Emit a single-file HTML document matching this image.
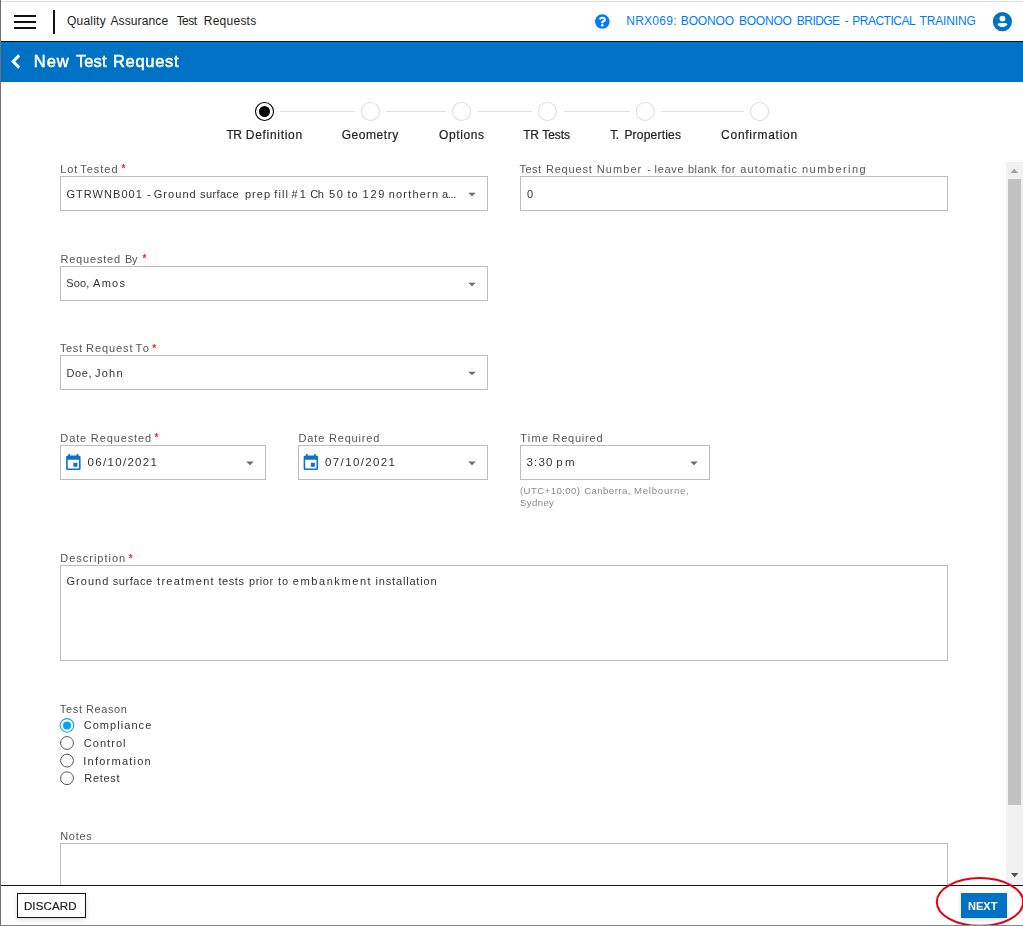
<!DOCTYPE html>
<html><head><meta charset="utf-8"><title>New Test Request</title>
<style>
html,body{margin:0;padding:0;background:#fff;overflow:hidden}
body{width:1023px;height:926px;position:relative;font-family:"Liberation Sans",sans-serif}
.t{position:absolute;white-space:pre;line-height:20px;height:20px;font-family:"Liberation Sans",sans-serif}
.a{position:absolute;display:block}
.g{position:absolute;left:0;top:0;width:1023px;height:926px;will-change:transform}
.b{position:absolute;box-sizing:border-box;border:1px solid #bdbdbd;background:#fff}
</style></head><body>
<div style="position:absolute;left:0;top:1px;width:1023px;height:1px;background:#ddd"></div>
<div style="position:absolute;left:0;top:41px;width:1023px;height:1px;background:#111"></div>
<div style="position:absolute;left:0;top:42px;width:1023px;height:40px;background:#0072c6"></div>
<div style="position:absolute;left:14px;top:15px;width:22px;height:2px;background:#111"></div>
<div style="position:absolute;left:14px;top:21px;width:22px;height:2px;background:#111"></div>
<div style="position:absolute;left:14px;top:27px;width:22px;height:2px;background:#111"></div>
<div style="position:absolute;left:53px;top:10px;width:2px;height:24px;background:#111"></div>
<svg class="a" style="left:594px;top:14px" width="17" height="16" viewBox="-27.300 0 580.270 546.130"><path fill="#007bff" d="M504 256c0 136.997-111.043 248-248 248S8 392.997 8 256C8 119.083 119.043 8 256 8s248 111.083 248 248zM262.655 90c-54.497 0-89.255 22.957-116.549 63.758-3.536 5.286-2.353 12.415 2.715 16.258l34.699 26.31c5.205 3.947 12.621 3.008 16.665-2.122 17.864-22.658 30.113-35.797 57.303-35.797 20.429 0 45.698 13.148 45.698 32.958 0 14.976-12.363 22.667-32.534 33.976C247.128 238.528 216 254.941 216 296v4c0 6.627 5.373 12 12 12h56c6.627 0 12-5.373 12-12v-1.333c0-28.462 83.186-29.647 83.186-106.667 0-58.002-60.165-102-116.531-102zM256 338c-25.365 0-46 20.635-46 46 0 25.364 20.635 46 46 46s46-20.636 46-46c0-25.365-20.635-46-46-46z"/></svg>
<svg class="a" style="left:991px;top:10px" width="23" height="23" viewBox="991 10 23 23"><circle cx="1002.400" cy="21.600" r="9.600" fill="#0072c6"/><circle cx="1002.450" cy="18.600" r="2.950" fill="#fff"/><path fill="#fff" d="M997.450 24.200C997.450 22.500 1007.450 22.500 1007.450 24.200C1006.400 25.900 1004.600 27.050 1002.450 27.050C1000.300 27.050 998.500 25.900 997.450 24.200Z"/></svg>
<svg class="a" style="left:9px;top:52px" width="14" height="19" viewBox="0 0 14 19"><path d="M10.200 3.400L4.100 9.500l6.100 6.100" fill="none" stroke="#fff" stroke-width="2.900"/></svg>
<svg class="a" style="left:253px;top:100px" width="24" height="24" viewBox="0 0 24 24"><g transform="translate(0.500 0.500)"><circle cx="11" cy="11" r="9" fill="#fff" stroke="#000" stroke-width="1.100"/><circle cx="11" cy="11" r="5.500" fill="#000"/></g></svg><div style="position:absolute;left:280px;top:111px;width:75px;height:1px;background:#e2e2e2"></div><svg class="a" style="left:359px;top:100px" width="24" height="24" viewBox="0 0 24 24"><g transform="translate(0.500 0.500)"><circle cx="11" cy="11" r="9.050" fill="#fff" stroke="#e0e0e0" stroke-width="1.100"/></g></svg><div style="position:absolute;left:386px;top:111px;width:60px;height:1px;background:#e2e2e2"></div><svg class="a" style="left:450px;top:100px" width="24" height="24" viewBox="0 0 24 24"><g transform="translate(0.500 0.500)"><circle cx="11" cy="11" r="9.050" fill="#fff" stroke="#e0e0e0" stroke-width="1.100"/></g></svg><div style="position:absolute;left:478px;top:111px;width:54px;height:1px;background:#e2e2e2"></div><svg class="a" style="left:536px;top:100px" width="24" height="24" viewBox="0 0 24 24"><g transform="translate(0.500 0.500)"><circle cx="11" cy="11" r="9.050" fill="#fff" stroke="#e0e0e0" stroke-width="1.100"/></g></svg><div style="position:absolute;left:564px;top:111px;width:66px;height:1px;background:#e2e2e2"></div><svg class="a" style="left:634px;top:100px" width="24" height="24" viewBox="0 0 24 24"><g transform="translate(0.300 0.500)"><circle cx="11" cy="11" r="9.050" fill="#fff" stroke="#e0e0e0" stroke-width="1.100"/></g></svg><div style="position:absolute;left:661px;top:111px;width:83px;height:1px;background:#e2e2e2"></div><svg class="a" style="left:748px;top:100px" width="24" height="24" viewBox="0 0 24 24"><g transform="translate(0.500 0.500)"><circle cx="11" cy="11" r="9.050" fill="#fff" stroke="#e0e0e0" stroke-width="1.100"/></g></svg>
<div style="position:absolute;left:1006px;top:162px;width:17px;height:723px;background:#f1f1f1"></div>
<div style="position:absolute;left:1008px;top:179px;width:13px;height:626px;background:#c1c1c1"></div>
<svg class="a" style="left:1010px;top:168px" width="10" height="6" viewBox="0 0 10 6"><g transform="translate(0.600 0.700)"><path d="M0 4.300h7.600L3.800 0z" fill="#a3a3a3"/></g></svg>
<svg class="a" style="left:1010px;top:873px" width="10" height="6" viewBox="0 0 10 6"><g transform="translate(0.900 0.000)"><path d="M0 0h7.600L3.800 4.300z" fill="#505050"/></g></svg>
<div class="b" style="left:60px;top:176px;width:428px;height:35px"></div><div class="b" style="left:520px;top:176px;width:428px;height:35px"></div><div class="b" style="left:60px;top:266px;width:428px;height:35px"></div><div class="b" style="left:60px;top:355px;width:428px;height:35px"></div>
<div class="b" style="left:60px;top:445px;width:206px;height:35px"></div><div class="b" style="left:298px;top:445px;width:190px;height:35px"></div><div class="b" style="left:520px;top:445px;width:190px;height:35px"></div>
<div class="b" style="left:60px;top:565px;width:888px;height:96px"></div><div class="b" style="left:60px;top:843px;width:888px;height:60px"></div>
<svg class="a" style="left:468px;top:192px" width="9" height="6" viewBox="0 0 9 6"><g transform="translate(0.200 0.700)"><path d="M0 0h7.600L3.800 3.600z" fill="#6c6c6c"/></g></svg><svg class="a" style="left:468px;top:282px" width="9" height="6" viewBox="0 0 9 6"><g transform="translate(0.200 0.700)"><path d="M0 0h7.600L3.800 3.600z" fill="#6c6c6c"/></g></svg><svg class="a" style="left:468px;top:371px" width="9" height="6" viewBox="0 0 9 6"><g transform="translate(0.200 0.700)"><path d="M0 0h7.600L3.800 3.600z" fill="#6c6c6c"/></g></svg><svg class="a" style="left:246px;top:461px" width="9" height="6" viewBox="0 0 9 6"><g transform="translate(0.200 0.600)"><path d="M0 0h7.600L3.800 3.600z" fill="#6c6c6c"/></g></svg><svg class="a" style="left:468px;top:461px" width="9" height="6" viewBox="0 0 9 6"><g transform="translate(0.200 0.600)"><path d="M0 0h7.600L3.800 3.600z" fill="#6c6c6c"/></g></svg><svg class="a" style="left:690px;top:461px" width="9" height="6" viewBox="0 0 9 6"><g transform="translate(0.200 0.600)"><path d="M0 0h7.600L3.800 3.600z" fill="#6c6c6c"/></g></svg>
<svg class="a" style="left:63px;top:453px" width="22" height="21" viewBox="0 0 22 21"><g transform="translate(0.700 0.200) scale(0.80417)"><path fill="#0a72c8" d="M17 12h-5v5h5v-5zM16 1v2H8V1H6v2H5c-1.110 0-1.990.900-1.990 2L3 19c0 1.100.890 2 2 2h14c1.100 0 2-.900 2-2V5c0-1.100-.900-2-2-2h-1V1h-2zm3 18H5V8h14v11z"/></g></svg><svg class="a" style="left:301px;top:453px" width="21" height="21" viewBox="0 0 21 21"><g transform="translate(0.200 0.200) scale(0.80417)"><path fill="#0a72c8" d="M17 12h-5v5h5v-5zM16 1v2H8V1H6v2H5c-1.110 0-1.990.900-1.990 2L3 19c0 1.100.890 2 2 2h14c1.100 0 2-.900 2-2V5c0-1.100-.900-2-2-2h-1V1h-2zm3 18H5V8h14v11z"/></g></svg>
<svg class="a" style="left:59px;top:717px" width="17" height="18" viewBox="0 0 17 18"><g transform="translate(0.000 0.400)"><circle cx="8" cy="8" r="6.800" fill="#fff" stroke="#06a3f4" stroke-width="1.050"/><circle cx="8" cy="8" r="4" fill="#06a3f4"/></g></svg><svg class="a" style="left:59px;top:735px" width="17" height="17" viewBox="0 0 17 17"><g transform="translate(0.000 0.000)"><circle cx="8" cy="8" r="6.400" fill="#fff" stroke="#555" stroke-width="1"/></g></svg><svg class="a" style="left:59px;top:752px" width="17" height="18" viewBox="0 0 17 18"><g transform="translate(0.000 0.600)"><circle cx="8" cy="8" r="6.400" fill="#fff" stroke="#555" stroke-width="1"/></g></svg><svg class="a" style="left:59px;top:770px" width="17" height="18" viewBox="0 0 17 18"><g transform="translate(0.000 0.200)"><circle cx="8" cy="8" r="6.400" fill="#fff" stroke="#555" stroke-width="1"/></g></svg>
<div style="position:absolute;left:0;top:885px;width:1023px;height:41px;background:#fff"></div>
<div style="position:absolute;left:0;top:885px;width:1023px;height:1px;background:#111"></div>
<div style="position:absolute;left:17px;top:893px;width:69px;height:25px;box-sizing:border-box;border:1px solid #111;background:#fff;box-shadow:0 2px 5px rgba(0,0,0,.13)"></div>
<div style="position:absolute;left:961px;top:893px;width:46px;height:25px;background:#0072c6;box-shadow:0 2px 5px rgba(0,0,0,.13)"></div>
<span class="t" style="left:66.90px;top:10.94px;font-size:12px;color:#222;font-weight:400;letter-spacing:0.242px">Quality </span><span class="t" style="left:110.40px;top:10.94px;font-size:12px;color:#222;font-weight:400;letter-spacing:0.135px">Assurance</span><span class="t" style="left:176.64px;top:10.94px;font-size:12px;color:#222;font-weight:400;letter-spacing:-0.550px">Test </span><span class="t" style="left:203.80px;top:10.94px;font-size:12px;color:#222;font-weight:400;letter-spacing:0.244px">Requests</span><span class="t" style="left:626.20px;top:11.04px;font-size:12px;color:#007bff;font-weight:400;letter-spacing:0.274px">NRX069: </span><span class="t" style="left:680.80px;top:11.04px;font-size:12px;color:#007bff;font-weight:400;letter-spacing:-0.154px">BOONOO </span><span class="t" style="left:739.00px;top:11.04px;font-size:12px;color:#007bff;font-weight:400;letter-spacing:-0.234px">BOONOO </span><span class="t" style="left:796.87px;top:11.04px;font-size:12px;color:#007bff;font-weight:400;letter-spacing:-0.550px">BRIDGE </span><span class="t" style="left:844.50px;top:11.04px;font-size:12px;color:#007bff;font-weight:400;letter-spacing:0.000px">- </span><span class="t" style="left:852.20px;top:11.04px;font-size:12px;color:#007bff;font-weight:400;letter-spacing:-0.484px">PRACTICAL </span><span class="t" style="left:919.60px;top:11.04px;font-size:12px;color:#007bff;font-weight:400;letter-spacing:-0.157px">TRAINING</span><div class="g"><span class="t" style="left:33.80px;top:51.08px;font-size:16.5px;color:#fff;font-weight:400;letter-spacing:0.954px;-webkit-text-stroke:0.5px #fff">New </span><span class="t" style="left:75.90px;top:51.08px;font-size:16.5px;color:#fff;font-weight:400;letter-spacing:0.108px;-webkit-text-stroke:0.5px #fff">Test </span><span class="t" style="left:113.00px;top:51.08px;font-size:16.5px;color:#fff;font-weight:400;letter-spacing:0.671px;-webkit-text-stroke:0.5px #fff">Request</span><span class="t" style="left:226.46px;top:125.24px;font-size:12px;color:#222;font-weight:400;letter-spacing:-0.550px;-webkit-text-stroke:0.2px #222">TR </span><span class="t" style="left:245.80px;top:125.24px;font-size:12px;color:#222;font-weight:400;letter-spacing:0.705px;-webkit-text-stroke:0.2px #222">Definition</span><span class="t" style="left:341.70px;top:125.24px;font-size:12px;color:#222;font-weight:400;letter-spacing:0.560px;-webkit-text-stroke:0.2px #222">Geometry</span><span class="t" style="left:439.00px;top:125.24px;font-size:12px;color:#222;font-weight:400;letter-spacing:0.607px;-webkit-text-stroke:0.2px #222">Options</span><span class="t" style="left:523.36px;top:125.24px;font-size:12px;color:#222;font-weight:400;letter-spacing:-0.550px;-webkit-text-stroke:0.2px #222">TR </span><span class="t" style="left:542.30px;top:125.24px;font-size:12px;color:#222;font-weight:400;letter-spacing:-0.052px;-webkit-text-stroke:0.2px #222">Tests</span><span class="t" style="left:610.32px;top:125.24px;font-size:12px;color:#222;font-weight:400;letter-spacing:-0.550px;-webkit-text-stroke:0.2px #222">T. </span><span class="t" style="left:624.40px;top:125.24px;font-size:12px;color:#222;font-weight:400;letter-spacing:0.212px;-webkit-text-stroke:0.2px #222">Properties</span><span class="t" style="left:721.10px;top:125.24px;font-size:12px;color:#222;font-weight:400;letter-spacing:0.731px;-webkit-text-stroke:0.2px #222">Confirmation</span><span class="t" style="left:60.30px;top:158.99px;font-size:11px;color:#555;font-weight:400;letter-spacing:0.882px">Lot </span><span class="t" style="left:80.20px;top:158.99px;font-size:11px;color:#555;font-weight:400;letter-spacing:0.982px">Tested</span><span class="t" style="left:519.60px;top:158.99px;font-size:11px;color:#555;font-weight:400;letter-spacing:0.394px">Test </span><span class="t" style="left:545.90px;top:158.99px;font-size:11px;color:#555;font-weight:400;letter-spacing:0.831px">Request </span><span class="t" style="left:596.80px;top:158.99px;font-size:11px;color:#555;font-weight:400;letter-spacing:1.068px">Number </span><span class="t" style="left:647.30px;top:158.99px;font-size:11px;color:#555;font-weight:400;letter-spacing:0.000px">- </span><span class="t" style="left:654.60px;top:158.99px;font-size:11px;color:#555;font-weight:400;letter-spacing:0.680px">leave </span><span class="t" style="left:687.90px;top:158.99px;font-size:11px;color:#555;font-weight:400;letter-spacing:0.501px">blank </span><span class="t" style="left:721.50px;top:158.99px;font-size:11px;color:#555;font-weight:400;letter-spacing:0.563px">for </span><span class="t" style="left:740.20px;top:158.99px;font-size:11px;color:#555;font-weight:400;letter-spacing:1.151px">automatic </span><span class="t" style="left:802.00px;top:158.99px;font-size:11px;color:#555;font-weight:400;letter-spacing:1.468px">numbering</span><span class="t" style="left:66.40px;top:183.99px;font-size:11px;color:#333;font-weight:400;letter-spacing:1.060px">GTRWNB001 </span><span class="t" style="left:147.00px;top:183.99px;font-size:11px;color:#333;font-weight:400;letter-spacing:0.000px">- </span><span class="t" style="left:153.70px;top:183.99px;font-size:11px;color:#333;font-weight:400;letter-spacing:1.066px">Ground </span><span class="t" style="left:200.00px;top:183.99px;font-size:11px;color:#333;font-weight:400;letter-spacing:0.424px">surface </span><span class="t" style="left:245.00px;top:183.99px;font-size:11px;color:#333;font-weight:400;letter-spacing:1.001px">prep </span><span class="t" style="left:274.30px;top:183.99px;font-size:11px;color:#333;font-weight:400;letter-spacing:1.052px">fill </span><span class="t" style="left:291.40px;top:183.99px;font-size:11px;color:#333;font-weight:400;letter-spacing:2.282px">#1 </span><span class="t" style="left:310.20px;top:183.99px;font-size:11px;color:#333;font-weight:400;letter-spacing:-0.444px">Ch </span><span class="t" style="left:329.10px;top:183.99px;font-size:11px;color:#333;font-weight:400;letter-spacing:1.482px">50 </span><span class="t" style="left:347.60px;top:183.99px;font-size:11px;color:#333;font-weight:400;letter-spacing:0.944px">to </span><span class="t" style="left:362.60px;top:183.99px;font-size:11px;color:#333;font-weight:400;letter-spacing:1.732px">129 </span><span class="t" style="left:388.70px;top:183.99px;font-size:11px;color:#333;font-weight:400;letter-spacing:1.207px">northern </span><span class="t" style="left:442.10px;top:183.99px;font-size:11px;color:#333;font-weight:400;letter-spacing:-0.377px">a...</span><span class="t" style="left:526.90px;top:183.99px;font-size:11px;color:#333;font-weight:400;letter-spacing:0.000px">0</span><span class="t" style="left:60.40px;top:249.09px;font-size:11px;color:#555;font-weight:400;letter-spacing:0.814px">Requested </span><span class="t" style="left:124.90px;top:249.09px;font-size:11px;color:#555;font-weight:400;letter-spacing:-0.137px">By</span><span class="t" style="left:66.20px;top:273.19px;font-size:11px;color:#333;font-weight:400;letter-spacing:0.143px">Soo, </span><span class="t" style="left:93.10px;top:273.19px;font-size:11px;color:#333;font-weight:400;letter-spacing:1.227px">Amos</span><span class="t" style="left:59.90px;top:337.99px;font-size:11px;color:#555;font-weight:400;letter-spacing:0.661px">Test </span><span class="t" style="left:86.10px;top:337.99px;font-size:11px;color:#555;font-weight:400;letter-spacing:0.898px">Request </span><span class="t" style="left:135.40px;top:337.99px;font-size:11px;color:#555;font-weight:400;letter-spacing:1.900px">To</span><span class="t" style="left:66.50px;top:363.09px;font-size:11px;color:#333;font-weight:400;letter-spacing:0.574px">Doe, </span><span class="t" style="left:94.90px;top:363.09px;font-size:11px;color:#333;font-weight:400;letter-spacing:1.255px">John</span><span class="t" style="left:60.30px;top:428.09px;font-size:11px;color:#555;font-weight:400;letter-spacing:0.894px">Date </span><span class="t" style="left:90.80px;top:428.09px;font-size:11px;color:#555;font-weight:400;letter-spacing:0.901px">Requested</span><span class="t" style="left:298.50px;top:428.09px;font-size:11px;color:#555;font-weight:400;letter-spacing:0.894px">Date </span><span class="t" style="left:328.90px;top:428.09px;font-size:11px;color:#555;font-weight:400;letter-spacing:0.840px">Required</span><span class="t" style="left:520.30px;top:428.19px;font-size:11px;color:#555;font-weight:400;letter-spacing:1.261px">Time </span><span class="t" style="left:552.50px;top:428.19px;font-size:11px;color:#555;font-weight:400;letter-spacing:0.768px">Required</span><span class="t" style="left:87.60px;top:452.12px;font-size:11.5px;color:#333;font-weight:400;letter-spacing:1.304px">06/10/2021</span><span class="t" style="left:325.10px;top:452.12px;font-size:11.5px;color:#333;font-weight:400;letter-spacing:1.360px">07/10/2021</span><span class="t" style="left:526.40px;top:452.22px;font-size:11.5px;color:#333;font-weight:400;letter-spacing:1.238px">3:30 </span><span class="t" style="left:556.20px;top:452.22px;font-size:11.5px;color:#333;font-weight:400;letter-spacing:2.454px">pm</span><span class="t" style="left:520.00px;top:480.97px;font-size:9.6px;color:#8a8a8a;font-weight:400;letter-spacing:0.428px">(UTC+10:00) </span><span class="t" style="left:584.20px;top:480.97px;font-size:9.6px;color:#8a8a8a;font-weight:400;letter-spacing:0.438px">Canberra, </span><span class="t" style="left:634.00px;top:480.97px;font-size:9.6px;color:#8a8a8a;font-weight:400;letter-spacing:0.752px">Melbourne,</span><span class="t" style="left:520.00px;top:492.67px;font-size:9.6px;color:#8a8a8a;font-weight:400;letter-spacing:0.379px">Sydney</span><span class="t" style="left:60.30px;top:547.99px;font-size:11px;color:#555;font-weight:400;letter-spacing:0.980px">Description</span><span class="t" style="left:66.40px;top:571.09px;font-size:11px;color:#333;font-weight:400;letter-spacing:1.066px">Ground </span><span class="t" style="left:112.80px;top:571.09px;font-size:11px;color:#333;font-weight:400;letter-spacing:0.558px">surface </span><span class="t" style="left:157.10px;top:571.09px;font-size:11px;color:#333;font-weight:400;letter-spacing:1.249px">treatment </span><span class="t" style="left:218.50px;top:571.09px;font-size:11px;color:#333;font-weight:400;letter-spacing:0.543px">tests </span><span class="t" style="left:249.00px;top:571.09px;font-size:11px;color:#333;font-weight:400;letter-spacing:0.539px">prior </span><span class="t" style="left:277.90px;top:571.09px;font-size:11px;color:#333;font-weight:400;letter-spacing:0.944px">to </span><span class="t" style="left:292.80px;top:571.09px;font-size:11px;color:#333;font-weight:400;letter-spacing:1.585px">embankment </span><span class="t" style="left:375.60px;top:571.09px;font-size:11px;color:#333;font-weight:400;letter-spacing:0.813px">installation</span><span class="t" style="left:59.70px;top:699.19px;font-size:11px;color:#555;font-weight:400;letter-spacing:0.727px">Test </span><span class="t" style="left:86.10px;top:699.19px;font-size:11px;color:#555;font-weight:400;letter-spacing:0.581px">Reason</span><span class="t" style="left:83.70px;top:715.29px;font-size:11px;color:#333;font-weight:400;letter-spacing:1.059px">Compliance</span><span class="t" style="left:83.70px;top:732.89px;font-size:11px;color:#333;font-weight:400;letter-spacing:1.064px">Control</span><span class="t" style="left:83.30px;top:750.79px;font-size:11px;color:#333;font-weight:400;letter-spacing:1.239px">Information</span><span class="t" style="left:84.30px;top:768.09px;font-size:11px;color:#333;font-weight:400;letter-spacing:0.693px">Retest</span><span class="t" style="left:60.20px;top:826.29px;font-size:11px;color:#555;font-weight:400;letter-spacing:0.716px">Notes</span><span class="t" style="left:23.90px;top:896.12px;font-size:11.5px;color:#222;font-weight:400;letter-spacing:0.142px;-webkit-text-stroke:0.2px #222">DISCARD</span><span class="t" style="left:968.10px;top:896.29px;font-size:11px;color:#fff;font-weight:700;letter-spacing:-0.006px">NEXT</span><span class="t" style="left:121.60px;top:159.40px;font-size:10px;color:#fa2222;font-weight:700">*</span><span class="t" style="left:142.40px;top:249.30px;font-size:10px;color:#fa2222;font-weight:700">*</span><span class="t" style="left:152.30px;top:338.70px;font-size:10px;color:#fa2222;font-weight:700">*</span><span class="t" style="left:154.50px;top:428.20px;font-size:10px;color:#fa2222;font-weight:700">*</span><span class="t" style="left:128.75px;top:548.70px;font-size:10px;color:#fa2222;font-weight:700">*</span></div>
<svg class="a" style="left:930px;top:870px" width="93" height="56" viewBox="930 870 93 56"><ellipse cx="980" cy="901.900" rx="43.200" ry="23.900" fill="none" stroke="#e4000f" stroke-width="2"/></svg>
<div style="position:absolute;left:0;top:0;width:1px;height:926px;background:#707070"></div>
<div style="position:absolute;left:0;top:925px;width:1023px;height:1px;background:#888"></div>
</body></html>
